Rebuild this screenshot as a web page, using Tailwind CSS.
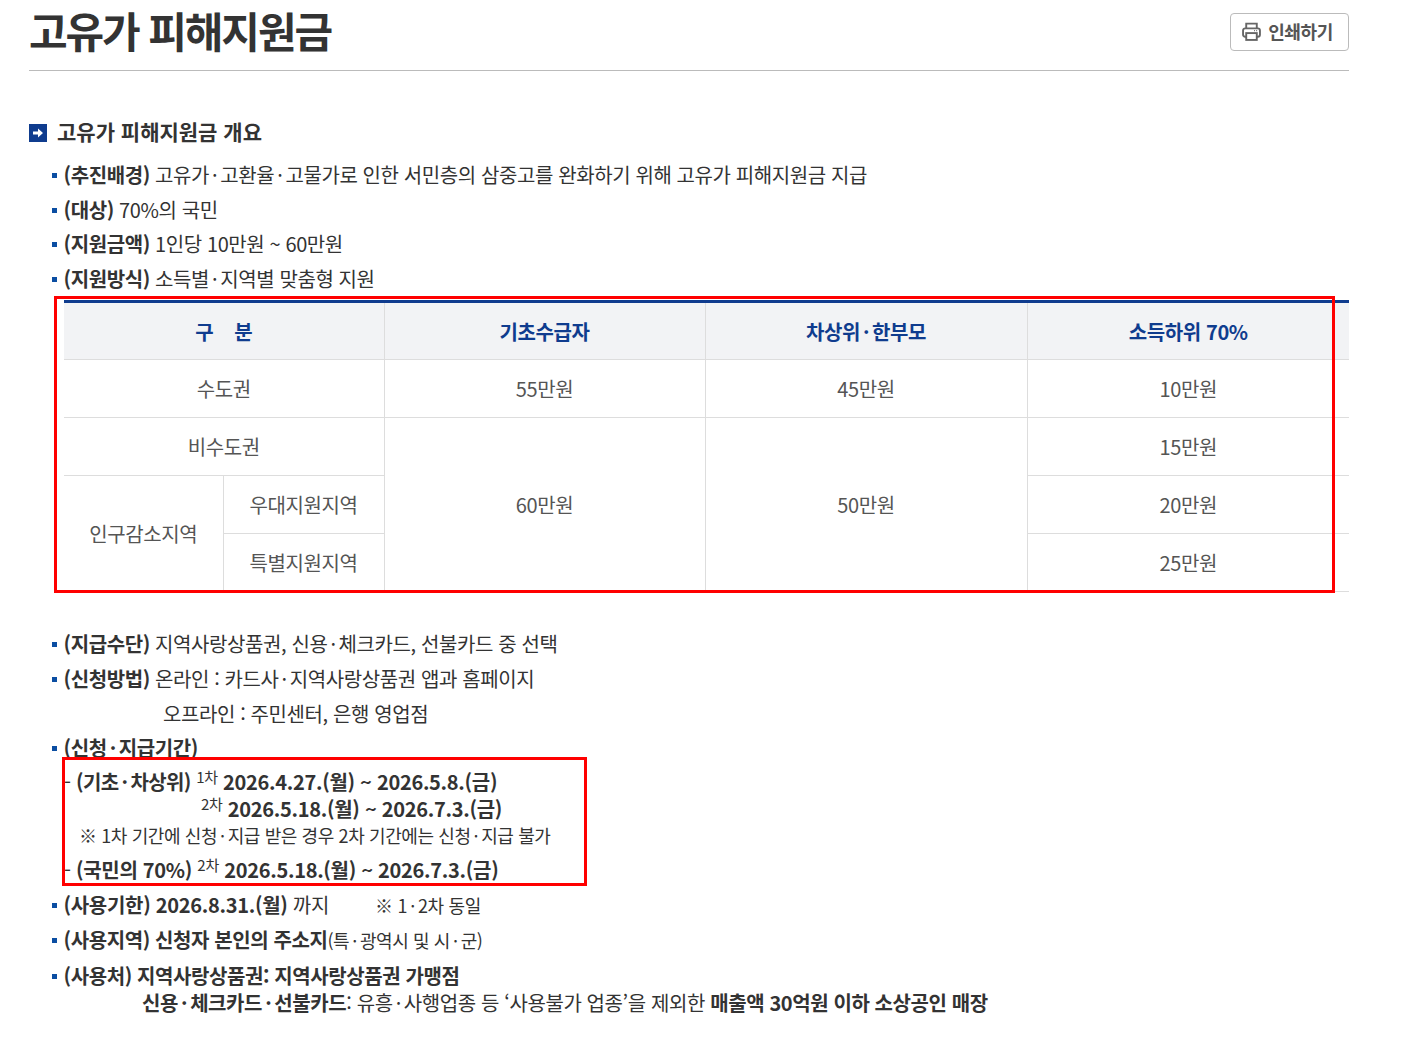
<!DOCTYPE html>
<html lang="ko">
<head>
    <meta charset="UTF-8">
    <meta name="viewport" content="width=device-width, initial-scale=1.0">
    <title>고유가 피해지원금</title>
    <script src="https://cdn.jsdelivr.net/npm/@tailwindcss/browser@4"></script>
</head>
<body class="bg-white text-[#333] font-['Noto_Sans_CJK_KR','Noto_Sans',sans-serif] overflow-hidden">
<div class="relative w-[1428px] h-[1049px] pl-[29px] overflow-hidden">
    <div class="w-[1320px]">
        <header class="flex items-center justify-between h-[71px] pb-[7px] border-b border-[#bbb]">
            <h1 class="text-[42px] leading-[50px] font-bold tracking-[-2.1px] -mt-[4px]">고유가 피해지원금</h1>
            <button class="flex items-center justify-center gap-[7px] w-[119px] h-[38px] pr-[4px] border border-[#bbb] rounded-[4px] text-[18px] font-bold text-[#555] tracking-[-0.4px]">
                <svg class="w-[19px] h-[19px]" viewBox="0 0 18 18" fill="none" stroke="#666" stroke-width="1.8"><path d="M4 6V1.500h10V6"/><rect x="1" y="6" width="16" height="8" rx="2"/><rect x="4" y="10.500" width="10" height="6.500" fill="#fff"/><path d="M11.500 8.200h.8M13.500 8.200h.8" stroke-width="1.200"/></svg>
                인쇄하기
            </button>
        </header>

        <h2 class="flex items-center gap-[10px] mt-[45px] text-[21px] leading-[30px] font-bold">
            <span class="flex items-center justify-center w-[18px] h-[18px] mt-[4px] bg-[#0f3c8e]">
                <svg class="w-[12px] h-[12px]" viewBox="0 0 12 12" fill="#fff"><path d="M1 4.500h5V1.500L11 6 6 10.500V7.500H1z"/></svg>
            </span>
            고유가 피해지원금 개요
        </h2>

        <ul class="mt-[12px] text-[20px] leading-[34.6px] tracking-[-0.4px]">
            <li class="pl-[23px]"><span class="inline-block w-[5px] h-[5px] bg-[#0b4ea2] mr-[6.500px] align-[5px]"></span><b>(추진배경)</b> 고유가<span class="mx-[3px]">·</span>고환율<span class="mx-[3px]">·</span>고물가로 인한 서민층의 삼중고를 완화하기 위해 고유가 피해지원금 지급</li>
            <li class="pl-[23px]"><span class="inline-block w-[5px] h-[5px] bg-[#0b4ea2] mr-[6.500px] align-[5px]"></span><b>(대상)</b> 70%의 국민</li>
            <li class="pl-[23px]"><span class="inline-block w-[5px] h-[5px] bg-[#0b4ea2] mr-[6.500px] align-[5px]"></span><b>(지원금액)</b> 1인당 10만원 ~ 60만원</li>
            <li class="pl-[23px]"><span class="inline-block w-[5px] h-[5px] bg-[#0b4ea2] mr-[6.500px] align-[5px]"></span><b>(지원방식)</b> 소득별<span class="mx-[3px]">·</span>지역별 맞춤형 지원</li>
        </ul>

        <table class="table-fixed border-collapse w-[1285px] ml-[35px] mt-[4px] border-t-[3px] border-t-[#0f3c8e] text-[20px] tracking-[-0.4px] text-[#555] text-center">
            <colgroup>
                <col class="w-[159px]"><col class="w-[161px]"><col class="w-[321px]"><col class="w-[322px]"><col class="w-[322px]">
            </colgroup>
            <thead>
                <tr class="h-[58px] bg-[#f2f3f5] text-[#0f3c8e] font-bold">
                    <th colspan="2" class="pt-[2px] border-b border-b-[#ddd] border-r border-r-[#ddd] font-bold whitespace-pre">구    분</th>
                    <th class="pt-[2px] border-b border-b-[#ddd] border-r border-r-[#ddd] font-bold">기초수급자</th>
                    <th class="pt-[2px] border-b border-b-[#ddd] border-r border-r-[#ddd] font-bold">차상위<span class="mx-[3px]">·</span>한부모</th>
                    <th class="pt-[2px] border-b border-b-[#ddd] font-bold">소득하위 70%</th>
                </tr>
            </thead>
            <tbody>
                <tr class="h-[58px]">
                    <td colspan="2" class="border-b border-b-[#ddd] border-r border-r-[#ddd]">수도권</td>
                    <td class="border-b border-b-[#ddd] border-r border-r-[#ddd]">55만원</td>
                    <td class="border-b border-b-[#ddd] border-r border-r-[#ddd]">45만원</td>
                    <td class="border-b border-b-[#ddd]">10만원</td>
                </tr>
                <tr class="h-[58px]">
                    <td colspan="2" class="border-b border-b-[#ddd] border-r border-r-[#ddd]">비수도권</td>
                    <td rowspan="3" class="border-b border-b-[#ddd] border-r border-r-[#ddd]">60만원</td>
                    <td rowspan="3" class="border-b border-b-[#ddd] border-r border-r-[#ddd]">50만원</td>
                    <td class="border-b border-b-[#ddd]">15만원</td>
                </tr>
                <tr class="h-[58px]">
                    <td rowspan="2" class="border-b border-b-[#ddd] border-r border-r-[#ddd]">인구감소지역</td>
                    <td class="border-b border-b-[#ddd] border-r border-r-[#ddd]">우대지원지역</td>
                    <td class="border-b border-b-[#ddd]">20만원</td>
                </tr>
                <tr class="h-[58px]">
                    <td class="border-b border-b-[#ddd] border-r border-r-[#ddd]">특별지원지역</td>
                    <td class="border-b border-b-[#ddd]">25만원</td>
                </tr>
            </tbody>
        </table>

        <ul class="mt-[35px] text-[20px] leading-[34.6px] tracking-[-0.4px]">
            <li class="pl-[23px]"><span class="inline-block w-[5px] h-[5px] bg-[#0b4ea2] mr-[6.500px] align-[5px]"></span><b>(지급수단)</b> 지역사랑상품권, 신용<span class="mx-[3px]">·</span>체크카드, 선불카드 중 선택</li>
            <li class="pl-[23px]"><span class="inline-block w-[5px] h-[5px] bg-[#0b4ea2] mr-[6.500px] align-[5px]"></span><b>(신청방법)</b> 온라인 : 카드사<span class="mx-[3px]">·</span>지역사랑상품권 앱과 홈페이지</li>
            <li class="pl-[134px]">오프라인 : 주민센터, 은행 영업점</li>
            <li class="pl-[23px]"><span class="inline-block w-[5px] h-[5px] bg-[#0b4ea2] mr-[6.500px] align-[5px]"></span><b>(신청<span class="mx-[3px]">·</span>지급기간)</b></li>
        </ul>
        <div class="pl-[35px] text-[20px] leading-[27px] tracking-[-0.3px] font-bold">
            <p class="h-[27px] mt-[2.500px]"><span class="font-normal">- </span><span class="tracking-[-0.6px]">(기초<span class="mx-[3px]">·</span>차상위)</span> <sup class="font-normal text-[15px]">1차</sup> 2026.4.27.(월) ~ 2026.5.8.(금)</p>
            <p class="pl-[137px] h-[27px]"><sup class="font-normal text-[15px]">2차</sup> 2026.5.18.(월) ~ 2026.7.3.(금)</p>
            <p class="pl-[15px] h-[27px] font-normal text-[18px] tracking-[-0.4px]">※ 1차 기간에 신청<span class="mx-[3px]">·</span>지급 받은 경우 2차 기간에는 신청<span class="mx-[3px]">·</span>지급 불가</p>
            <p class="h-[27px] mt-[7px]"><span class="font-normal">- </span>(국민의 70%) <sup class="font-normal text-[15px]">2차</sup> 2026.5.18.(월) ~ 2026.7.3.(금)</p>
        </div>
        <ul class="mt-[5px] text-[20px] leading-[34.5px] tracking-[-0.4px]">
            <li class="pl-[23px] tracking-[-0.3px]"><span class="inline-block w-[5px] h-[5px] bg-[#0b4ea2] mr-[6.500px] align-[5px]"></span><b>(사용기한) 2026.8.31.(월)</b> 까지<span class="inline-block w-[46px]"></span><span class="text-[18px]">※ 1<span class="mx-[3px]">·</span>2차 동일</span></li>
            <li class="pl-[23px] mb-[2px]"><span class="inline-block w-[5px] h-[5px] bg-[#0b4ea2] mr-[6.500px] align-[5px]"></span><b>(사용지역) 신청자 본인의 주소지</b><span class="text-[18px]">(특<span class="mx-[3px]">·</span>광역시 및 시<span class="mx-[3px]">·</span>군)</span></li>
            <li class="pl-[23px] h-[30px]"><span class="inline-block w-[5px] h-[5px] bg-[#0b4ea2] mr-[6.500px] align-[5px]"></span><b>(사용처) 지역사랑상품권: 지역사랑상품권 가맹점</b></li>
            <li class="pl-[113px] leading-[27px]"><b>신용<span class="mx-[3px]">·</span>체크카드<span class="mx-[3px]">·</span>선불카드</b>: 유흥<span class="mx-[3px]">·</span>사행업종 등 ‘사용불가 업종’을 제외한 <b>매출액 30억원 이하 소상공인 매장</b></li>
        </ul>
    </div>

    <div class="absolute left-[54px] top-[296px] w-[1281px] h-[297px] border-[3px] border-[#f00]"></div>
    <div class="absolute left-[62px] top-[757px] w-[525px] h-[129px] border-[3px] border-[#f00]"></div>
</div>
</body>
</html>
